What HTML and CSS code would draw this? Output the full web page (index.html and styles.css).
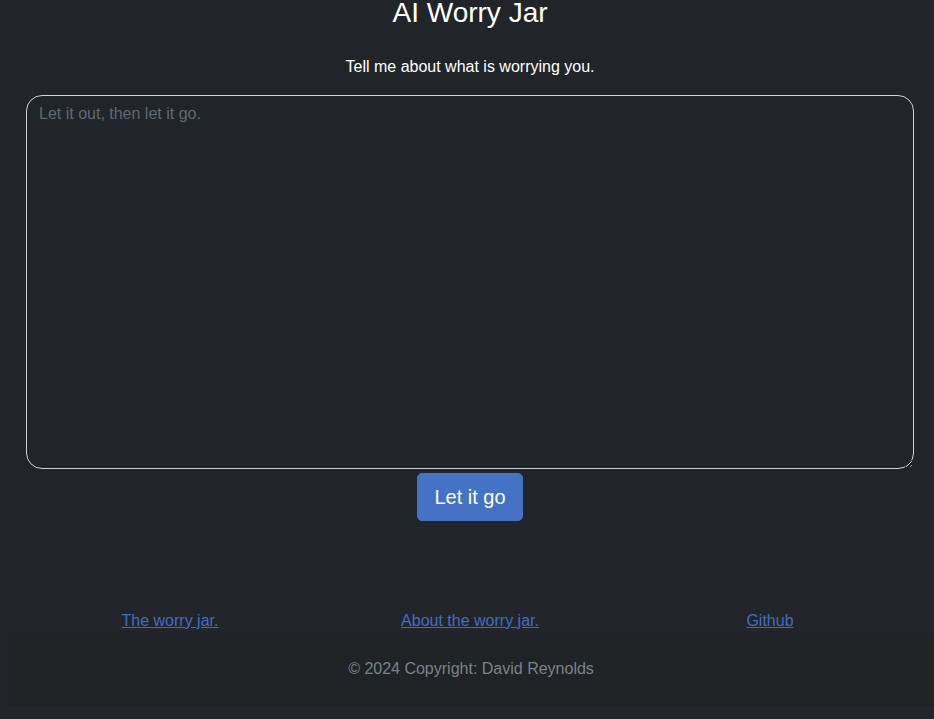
FILE: index.html
```html
<!DOCTYPE html>
<html lang="en">
<head>
<meta charset="utf-8">
<title>AI Worry Jar</title>
<link rel="stylesheet" href="styles.css">
</head>
<body>
<main class="page">
  <h1 class="title">AI Worry Jar</h1>
  <p class="subtitle">Tell me about what is worrying you.</p>
  <form class="worry-form">
    <textarea class="worry-input" placeholder="Let it out, then let it go."></textarea>
    <button type="button" class="btn-release">Let it go</button>
  </form>
</main>
<nav class="links">
  <div class="link-col"><a href="#">The worry jar.</a></div>
  <div class="link-col"><a href="#">About the worry jar.</a></div>
  <div class="link-col"><a href="#">Github</a></div>
</nav>
<footer class="footer">© 2024 Copyright: David Reynolds</footer>
</body>
</html>
```

FILE: styles.css
```css
html, body {
  background: #212529;
}
body {
  margin: 0;
  padding: 0 0 0 6px;
  font-family: "Liberation Sans", Arial, sans-serif;
  font-size: 16px;
  line-height: 1.5;
  color: #ffffff;
  overflow: hidden;
}
.page {
  display: flex;
  flex-direction: column;
  align-items: center;
}
.title {
  margin: -4px 0 0;
  font-size: 28px;
  font-weight: 400;
  line-height: 1.2;
  color: #ffffff;
}
.subtitle {
  margin: 25px 0 16px;
}
.worry-form {
  align-self: stretch;
  display: flex;
  flex-direction: column;
  align-items: center;
  padding: 0 20px;
}
.worry-input {
  box-sizing: border-box;
  width: 100%;
  height: 374px;
  padding: 6px 12px;
  background: #212529;
  color: #dee2e6;
  border: 1px solid #d0d4d8;
  border-radius: 16px;
  font-family: "Liberation Sans", Arial, sans-serif;
  font-size: 16px;
  line-height: 1.5;
  resize: vertical;
  outline: none;
}
.worry-input::placeholder {
  color: #5f6973;
}
.btn-release {
  margin-top: 4px;
  padding: 8px 16px;
  background: #4472c4;
  color: #ffffff;
  border: 1px solid #4472c4;
  border-radius: 5px;
  font-family: "Liberation Sans", Arial, sans-serif;
  font-size: 20px;
  line-height: 1.5;
  cursor: pointer;
}
.links {
  display: grid;
  grid-template-columns: repeat(3, 1fr);
  padding: 0 14px;
  margin-top: 88px;
}
.link-col {
  text-align: center;
}
.links a {
  color: #416cc6;
  text-decoration: underline;
}
.footer {
  margin-left: 2px;
  padding: 24px 0 25px;
  background: rgba(0, 0, 0, 0.05);
  text-align: center;
  color: #7d8287;
}
```
